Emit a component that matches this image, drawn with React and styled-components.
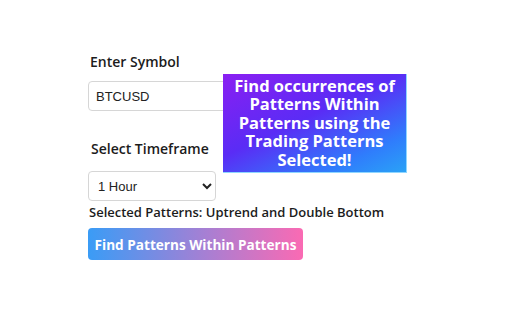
import React from "react";
import styled, { createGlobalStyle } from "styled-components";

const Global = createGlobalStyle`
  html, body { margin: 0; padding: 0; background: #ffffff; }
  body { font-family: "Open Sans", "Liberation Sans", sans-serif; color: #1c1c1c; }
`;

const Page = styled.div`
  position: relative;
  width: 512px;
  height: 320px;
  padding: 52px 0 0 88px;
  box-sizing: border-box;
`;

const Form = styled.div`
  display: flex;
  flex-direction: column;
  align-items: flex-start;
`;

const Label = styled.label`
  font-size: 14px;
  font-weight: 600;
  margin-left: ${p => p.$indent || 2}px;
  line-height: 20px;
`;

const Input = styled.input`
  margin-top: 9px;
  width: 152px;
  height: 30px;
  box-sizing: border-box;
  border: 1px solid #d6d6d6;
  border-radius: 4px;
  padding: 0 7px;
  font-family: "Liberation Sans", Arial, sans-serif;
  font-size: 13px;
  color: #222;
`;

const Select = styled.select`
  margin-top: 12px;
  width: 128px;
  height: 30px;
  box-sizing: border-box;
  border: 1px solid #d6d6d6;
  border-radius: 4px;
  padding: 0 5px;
  background: #fff;
  font-family: "Liberation Sans", Arial, sans-serif;
  font-size: 13px;
  color: #222;
`;

const Selected = styled.div`
  margin-top: 3px;
  margin-left: 1px;
  font-size: 13px;
  font-weight: 600;
  line-height: 17px;
`;

const Action = styled.button`
  margin-top: 7px;
  width: 215px;
  height: 32px;
  border: none;
  border-radius: 4px;
  background: linear-gradient(90deg, #3a9cf6 0%, #a77fd3 55%, #fa6ab3 100%);
  color: #fff;
  font-family: "Open Sans", sans-serif;
  font-size: 13.6px;
  font-weight: 700;
  padding: 0;
`;

const Callout = styled.div`
  position: absolute;
  left: 223px;
  top: 74px;
  width: 184px;
  height: 99px;
  box-sizing: border-box;
  background: linear-gradient(155deg, #8a1ff2 0%, #5a2cf5 45%, #2f7dfc 80%, #2aa2f6 100%);
  border-right: 1px solid #8fd6ff;
  border-bottom: 1px solid #8fd6ff;
  color: #fff;
  font-size: 16.5px;
  font-weight: 700;
  line-height: 18.5px;
  text-align: center;
  display: flex;
  align-items: center;
  justify-content: center;
  padding: 0 4px;
`;

export default function App() {
  return (
    <Page>
      <Global />
      <Form>
        <Label>Enter Symbol</Label>
        <Input defaultValue="BTCUSD" />
        <Label $indent={3} style={{ marginTop: 28 }}>Select Timeframe</Label>
        <Select defaultValue="1h">
          <option value="1h">1 Hour</option>
          <option value="4h">4 Hours</option>
          <option value="1d">1 Day</option>
        </Select>
        <Selected>Selected Patterns: Uptrend and Double Bottom</Selected>
        <Action>Find Patterns Within Patterns</Action>
      </Form>
      <Callout>Find occurrences of Patterns Within Patterns using the Trading Patterns Selected!</Callout>
    </Page>
  );
}
